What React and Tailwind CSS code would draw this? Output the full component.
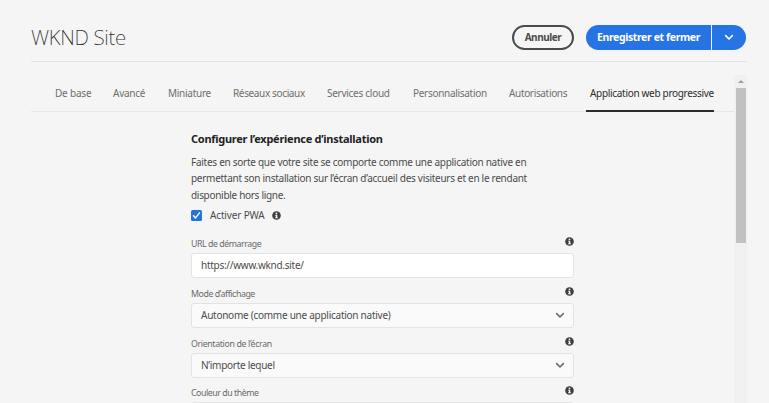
const TABS = [
  { label: 'De base', box: 'w-[36px] mr-[22px]', text: 'tracking-[-0.2px]' },
  { label: 'Avancé', box: 'w-[32px] mr-[23px]', text: 'tracking-[-0.25px]' },
  { label: 'Miniature', box: 'w-[43px] mr-[22px]', text: 'tracking-[-0.27px]' },
  { label: 'Réseaux sociaux', box: 'w-[72px] mr-[22px]', text: 'tracking-[-0.36px]' },
  { label: 'Services cloud', box: 'w-[63px] mr-[23px]', text: 'tracking-[-0.27px]' },
  { label: 'Personnalisation', box: 'w-[74px] mr-[22px]', text: 'tracking-[-0.3px]' },
  { label: 'Autorisations', box: 'w-[58px] mr-[19px]', text: 'tracking-[-0.34px]' },
];

function Info() {
  return (
    <svg className="h-[9px] w-[9px] shrink-0" viewBox="0 0 18 18">
      <circle cx="9" cy="9" r="8.6" fill="#3f3f3f" />
      <circle cx="9" cy="4.7" r="1.8" fill="#f5f5f5" />
      <path d="M6.5 7.7h4v5h1.3v1.8H6.2v-1.8h1.5V9.4H6.5z" fill="#f5f5f5" />
    </svg>
  );
}

function Chevron({ color, className }) {
  return (
    <svg className={className} viewBox="0 0 10 7" fill="none">
      <path d="M1.7 1.7 5 5l3.3-3.3" stroke={color} strokeWidth="1.7" strokeLinecap="round" strokeLinejoin="round" />
    </svg>
  );
}

function Field({ label, value, select, labelClass = '', valueClass = '' }) {
  return (
    <div className="h-[49.7px] shrink-0">
      <div className="flex h-[16px] items-start justify-between">
        <span className={`text-[8.8px] leading-[14px] text-[#6a6a6a] ${labelClass}`}>{label}</span>
        <Info />
      </div>
      <div className={`flex h-[25px] items-center justify-between rounded-[3px] border border-[#e3e3e3] pl-[9px] pr-[8px] ${select ? 'bg-[#fafafa]' : 'bg-white'}`}>
        <span className={`text-[10px] leading-[14px] text-[#4b4b4b] ${valueClass}`}>{value}</span>
        {select && <Chevron color="#6e6e6e" className="h-[7px] w-[10px]" />}
      </div>
    </div>
  );
}

export default function App() {
  return (
    <div className="flex h-[403px] w-[769px] flex-col overflow-hidden whitespace-nowrap bg-[#f5f5f5] pl-[31px] pr-[22px] font-['Noto_Sans',sans-serif]">
      <header className="flex h-[62px] shrink-0 items-start border-b border-[#e4e4e4] pr-px">
        <h1 className="mt-[22.5px] text-[20.5px] font-extralight leading-[28px] tracking-[-0.3px] text-[#2c2c2c]">WKND Site</h1>
        <button className="ml-auto mt-[25px] flex h-[25px] w-[62px] items-center justify-center rounded-full border-2 border-[#4b4b4b] text-[10px] font-bold tracking-[-0.45px] text-[#4b4b4b]">Annuler</button>
        <div className="ml-[12px] mt-[25px] flex h-[25px] gap-px">
          <button className="flex w-[125px] items-center justify-center rounded-l-full bg-[#2673e3] text-[10.5px] font-bold tracking-[-0.38px] text-white">Enregistrer et fermer</button>
          <button className="flex w-[34px] items-center justify-center rounded-r-full bg-[#2673e3]">
            <Chevron color="#ffffff" className="h-[7px] w-[10px]" />
          </button>
        </div>
      </header>

      <div className="flex min-h-0 flex-1 pt-[13px]">
        <main className="flex w-[703px] flex-col">
          <nav className="flex h-[37px] shrink-0 border-b border-[#e6e6e6] pl-[24px] text-[10px] leading-[36px] text-[#6e6e6e]">
            {TABS.map((t) => (
              <div key={t.label} className={`shrink-0 ${t.box} ${t.text}`}>{t.label}</div>
            ))}
            <div className="h-[37px] w-[128px] shrink-0 border-b-2 border-[#2c2c2c] pl-[4px] tracking-[-0.31px] text-[#2c2c2c]">Application web progressive</div>
          </nav>

          <section className="ml-[160px] w-[383px]">
            <h2 className="mt-[19px] text-[11px] font-bold leading-[16px] tracking-[-0.27px] text-[#222]">Configurer l’expérience d’installation</h2>
            <div className="mt-[7px] text-[10px] leading-[16.4px] text-[#4b4b4b]">
              <div className="tracking-[-0.27px]">Faites en sorte que votre site se comporte comme une application native en</div>
              <div className="tracking-[-0.28px]">permettant son installation sur l’écran d’accueil des visiteurs et en le rendant</div>
              <div className="tracking-[-0.3px]">disponible hors ligne.</div>
            </div>
            <div className="mt-[5px] flex h-[14px] items-center">
              <svg className="h-[11px] w-[11px]" viewBox="0 0 11 11">
                <rect width="11" height="11" rx="1.5" fill="#2673e3" />
                <path d="m2.5 5.7 2.1 2.2 3.9-5" fill="none" stroke="#fff" strokeWidth="1.5" strokeLinecap="round" strokeLinejoin="round" />
              </svg>
              <span className="ml-[8px] w-[62px] text-[10px] leading-[14px] tracking-[-0.15px] text-[#4b4b4b]">Activer PWA</span>
              <Info />
            </div>
            <div className="mt-[15px]">
              <Field label="URL de démarrage" value="https://www.wknd.site/" labelClass="tracking-[-0.45px]" valueClass="mt-[-2px] tracking-[-0.28px]" />
              <Field label="Mode d’affichage" value="Autonome (comme une application native)" select labelClass="tracking-[-0.43px]" valueClass="tracking-[-0.26px]" />
              <Field label="Orientation de l’écran" value="N’importe lequel" select labelClass="tracking-[-0.36px]" valueClass="tracking-[-0.28px]" />
              <Field label="Couleur du thème" value="" labelClass="tracking-[-0.45px]" />
            </div>
          </section>
        </main>
        <div className="flex w-[13px] flex-col items-center bg-[#f0f0f0]">
          <div className="flex h-[13px] items-center">
            <svg className="h-[3px] w-[6px]" viewBox="0 0 6 3"><path d="M0 3 3 0l3 3z" fill="#9d9d9d" /></svg>
          </div>
          <div className="h-[155px] w-[10px] bg-[#c1c1c1]" />
        </div>
      </div>
    </div>
  );
}
